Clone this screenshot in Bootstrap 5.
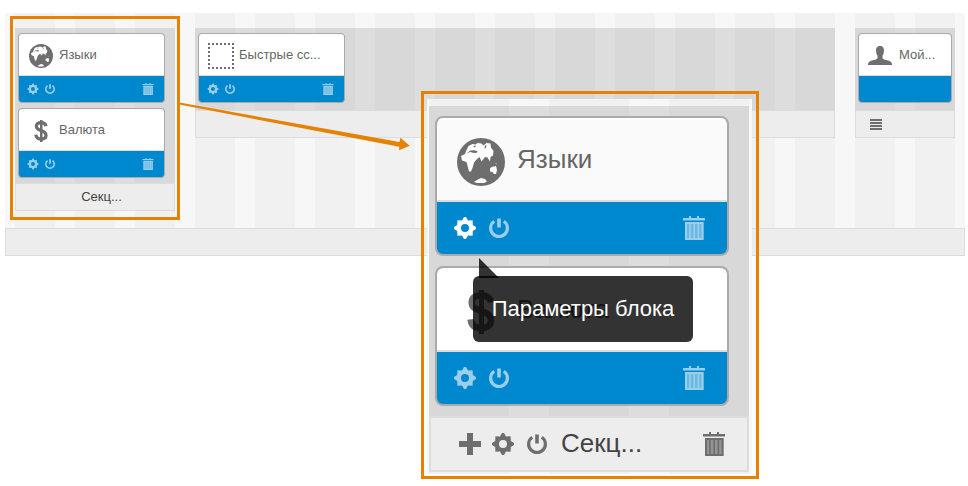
<!DOCTYPE html>
<html lang="ru">
<head>
<meta charset="utf-8">
<title>Макет</title>
<meta name="viewport" content="width=device-width, initial-scale=1">
<link href="https://cdn.jsdelivr.net/npm/bootstrap@5.3.0/dist/css/bootstrap.min.css" rel="stylesheet">
<style>
  body { font-family: "Liberation Sans", Arial, sans-serif; background: #fff; width: 968px; height: 486px; }
  .layout { --u: 1px; width: 960px; height: 243px; margin: 13px 0 0 5px; }
  .stripes { background: repeating-linear-gradient(90deg, #f1f1f1 0, #f1f1f1 calc(40 * var(--u)), #f7f7f7 calc(40 * var(--u)), #f7f7f7 calc(60 * var(--u))); }
  .layout.stripes { background-position: 10px 0; }
  .sections { gap: 20px; padding: 15px 10px 0; }
  .zone-body { background: rgba(0,0,0,.1); padding: calc(5 * var(--u)) calc(3 * var(--u)); gap: calc(5 * var(--u)); }
  .zone-body.single { height: 82px; }
  .zone-foot { background: #ededed; border: var(--u) solid #dcdcdc; height: calc(28 * var(--u)); font-size: calc(13 * var(--u)); line-height: calc(26 * var(--u)); color: #444; }
  .w-s { width: 160px; } .w-l { width: 640px; } .w-xs { width: 100px; }
  .tile { width: calc(147 * var(--u)); height: calc(70 * var(--u)); border: var(--u) solid #aaa; border-radius: calc(4 * var(--u)); background: #0088ce; }
  .tile-narrow { width: 94px; }
  .tile-top { height: calc(42 * var(--u)); background: #fff; border-bottom: var(--u) solid #ddd; padding-left: calc(8 * var(--u)); font-size: calc(13 * var(--u)); color: #666; }
  .tile-top.hot { background: #fafafa; box-shadow: inset 0 2px #fff; }
  .tile-top span { line-height: calc(41 * var(--u)); margin-left: calc(4 * var(--u)); }
  .glyph { width: calc(28 * var(--u)); height: calc(28 * var(--u)); margin-top: calc(3 * var(--u)); color: #6e6e6e; }
  .tile-bar { height: calc(26 * var(--u)); padding: 0 calc(10.5 * var(--u)) 0 calc(8 * var(--u)); color: #fff; }
  .ico { width: calc(12 * var(--u)); height: calc(12 * var(--u)); flex: none; display: block; }
  .tile-bar .ico { opacity: .6; }
  .tile-bar .ico.lit { opacity: 1; }
  .tile-bar .pw { margin-left: calc(5 * var(--u)); }
  .status { height: 28px; background: #ededed; border: 1px solid #dcdcdc; }
  .frame-s { left: 9.500px; top: 16px; width: 170px; height: 204px; border: 3px solid #e68200; }
  .frame-l { left: 421px; top: 91px; width: 338px; height: 388px; border: 3px solid #e68200; padding: 5px 4px 2px 3px; --u: 2px; }
  .lens { width: 325px; height: 375px; padding: 7px 3px 0 2px; }
  .lens.stripes { background-position: 2px 0; background-color: #f7f7f7; }
  .lens .zone-foot { color: #6e6e6e; padding: 0 21px 0 27px; }
  .lens .zone-foot .cap { color: #444; margin-left: 12px; line-height: 50px; margin-top: -2px; }
  .lens .zone-foot .g { margin-left: 9px; } .lens .zone-foot .p { margin-left: 10px; }
  .foot-label { padding-left: 13px; }
  .tip { left: 473px; top: 276px; width: 220px; height: 66px; border-radius: 6px; background: rgba(0,0,0,.8); color: #fff; font-size: 22px; line-height: 66px; }
  .tip::before { content: ""; position: absolute; left: 6px; top: -18px; width: 20px; height: 20px; background: rgba(0,0,0,.8); clip-path: polygon(0 0, 100% 100%, 0 100%); }
  .arrow { left: 0; top: 0; }
  .lines { margin-left: 14px; }
</style>
<script src="https://cdn.jsdelivr.net/npm/bootstrap@5.3.0/dist/js/bootstrap.bundle.min.js"></script>
</head>
<body class="position-relative overflow-hidden">
<svg class="d-none">
  <symbol id="gear" viewBox="0 0 24 24"><path fill="currentColor" fill-rule="evenodd" d="M11 1h2l2 3.400 4.600-.2.200 4.800L23 11v2l-3.200 2-.2 4.800-4.600-.2L13 23h-2l-2-3.400-4.600.2-.2-4.800L1 13v-2l3.200-2 .2-4.800 4.600.2zM12 8a4 4 0 1 0 0 8 4 4 0 0 0 0-8z"/></symbol>
  <symbol id="power" viewBox="0 0 24 24"><path fill="none" stroke="currentColor" stroke-width="3.2" d="M7.2 5.200a8.400 8.400 0 1 0 9.600 0"/><path fill="currentColor" d="M10.200 2.600h3.600v9h-3.600z"/></symbol>
  <symbol id="trash" viewBox="0 0 24 24"><g fill="currentColor"><path d="M1 2h22v2.400H1zM7 0h2v2H7zM15 0h2v2h-2z"/><path fill-opacity=".7" d="M3 6h18.500v18H3z"/><path d="M3 6h18.500v2H3zM3 22h18.500v2H3zM3 6h2v18H3zM19.500 6h2v18h-2zM7.200 7h1.600v16H7.200zM11.400 7H13v16h-1.600zM15.600 7h1.600v16h-1.600z"/></g></symbol>
  <symbol id="plus" viewBox="0 0 24 24"><path fill="currentColor" d="M9 1h6v8h8v6h-8v8H9v-8H1V9h8z"/></symbol>
  <symbol id="globe" viewBox="-4 -4 56 56"><circle cx="24" cy="24" r="24" fill="currentColor"/><path fill="#fff" d="M4 18l4-2 1.500-4 2-4 4-2 3 .5 2-1.500 4 .5 2 2 3-2.500 4 .5.5 4 2.500 3.500-.5 4.500-2.500 1.500-.5 4.500-2.500-4-2.500-.5-3.500 4.500-2-4.500-3 2.500-2.500 3-1 4-2 5h-2L9.500 24 5 22.500z"/><path fill="currentColor" d="M9 15.500l4-1.500 4 1 3-.3.500-1.700-4-.7-3 .2zM16 8l3-.5-1 2zM28 7.500l1.500-.5-.5 3-1.500.5z"/><path fill="#fff" d="M33 30l3-1.500h1.500L39 28l1 4-1 4h-2l-1.500-2-2.500-.5zM17 44l3-2 4-2 4 1 2 2.500-3 1.500h-7zM38.500 25l1.200.6-.6 1z"/></symbol>
  <symbol id="dollar" viewBox="0 0 56 56"><path fill="none" stroke="currentColor" stroke-width="6.500" d="M38 18.500C37 13 33.500 11.200 28 11.200c-5.700 0-9.300 2.600-9.300 7.200 0 11 19.300 6.200 19.300 18 0 5-4 7.600-9.800 7.600-6.200 0-10-2.600-10.600-8.600"/><path fill="currentColor" d="M26 6h5v44h-5z"/></symbol>
  <symbol id="dots" viewBox="0 0 28 28"><path fill="none" stroke="currentColor" stroke-width="2" stroke-dasharray="2 2" d="M1 2h26M1 26h26M2 1v26M26 1v26"/></symbol>
  <symbol id="person" viewBox="0 0 28 28"><path fill="currentColor" d="M13 4c3 0 4.200 2 4 5-.2 2.500-1 3.500-1.500 5v2.200c1 1.500 4 1.600 6.500 2.500 2 .8 3 2 3 4.300H1c0-2.300 1-3.500 3-4.300 2.500-.9 5.500-1 6.500-2.500V14C10 12.500 9.200 11.500 9 9c-.2-3 1-5 4-5z"/></symbol>
</svg>

<main class="layout stripes d-flex flex-column">
  <div class="sections d-flex align-items-start flex-grow-1">
    <section class="w-s">
      <div class="zone-body d-flex flex-column">
        <div class="tile overflow-hidden">
          <div class="tile-top d-flex"><svg class="glyph align-self-center"><use href="#globe"/></svg><span>Языки</span></div>
          <div class="tile-bar d-flex align-items-center"><svg class="ico"><use href="#gear"/></svg><svg class="ico pw"><use href="#power"/></svg><svg class="ico ms-auto"><use href="#trash"/></svg></div>
        </div>
        <div class="tile overflow-hidden">
          <div class="tile-top d-flex"><svg class="glyph align-self-center"><use href="#dollar"/></svg><span>Валюта</span></div>
          <div class="tile-bar d-flex align-items-center"><svg class="ico"><use href="#gear"/></svg><svg class="ico pw"><use href="#power"/></svg><svg class="ico ms-auto"><use href="#trash"/></svg></div>
        </div>
      </div>
      <div class="zone-foot foot-label text-center">Секц...</div>
    </section>
    <section class="w-l">
      <div class="zone-body single">
        <div class="tile overflow-hidden">
          <div class="tile-top d-flex"><svg class="glyph align-self-center"><use href="#dots"/></svg><span>Быстрые сс...</span></div>
          <div class="tile-bar d-flex align-items-center"><svg class="ico"><use href="#gear"/></svg><svg class="ico pw"><use href="#power"/></svg><svg class="ico ms-auto"><use href="#trash"/></svg></div>
        </div>
      </div>
      <div class="zone-foot"></div>
    </section>
    <section class="w-xs">
      <div class="zone-body single">
        <div class="tile tile-narrow overflow-hidden">
          <div class="tile-top d-flex"><svg class="glyph align-self-center"><use href="#person"/></svg><span>Мой...</span></div>
        </div>
      </div>
      <div class="zone-foot d-flex align-items-center"><svg class="lines" width="12" height="11"><path fill="#6e6e6e" d="M0 0h12v2H0zM0 3h12v2H0zM0 6h12v2H0zM0 9h12v2H0z"/></svg></div>
    </section>
  </div>
  <div class="status"></div>
</main>

<div class="frame-s position-absolute"></div>
<svg class="arrow position-absolute" width="420" height="160"><path fill="#e68200" d="M178 102.300L399.500 142l.8-4.200 9.500 7.900-10.800 4.500.3-3.400L178 104.300z"/></svg>

<div class="frame-l position-absolute">
  <div class="lens stripes">
    <div class="zone-body d-flex flex-column">
      <div class="tile overflow-hidden">
        <div class="tile-top hot d-flex"><svg class="glyph align-self-center"><use href="#globe"/></svg><span>Языки</span></div>
        <div class="tile-bar d-flex align-items-center"><svg class="ico lit"><use href="#gear"/></svg><svg class="ico pw"><use href="#power"/></svg><svg class="ico ms-auto"><use href="#trash"/></svg></div>
      </div>
      <div class="tile overflow-hidden">
        <div class="tile-top d-flex"><svg class="glyph align-self-center"><use href="#dollar"/></svg><span>Валюта</span></div>
        <div class="tile-bar d-flex align-items-center"><svg class="ico"><use href="#gear"/></svg><svg class="ico pw"><use href="#power"/></svg><svg class="ico ms-auto"><use href="#trash"/></svg></div>
      </div>
    </div>
    <div class="zone-foot d-flex align-items-center"><svg class="ico"><use href="#plus"/></svg><svg class="ico g"><use href="#gear"/></svg><svg class="ico p"><use href="#power"/></svg><span class="cap">Секц...</span><svg class="ico ms-auto"><use href="#trash"/></svg></div>
  </div>
</div>
<div class="tip position-absolute text-center">Параметры блока</div>
</body>
</html>
